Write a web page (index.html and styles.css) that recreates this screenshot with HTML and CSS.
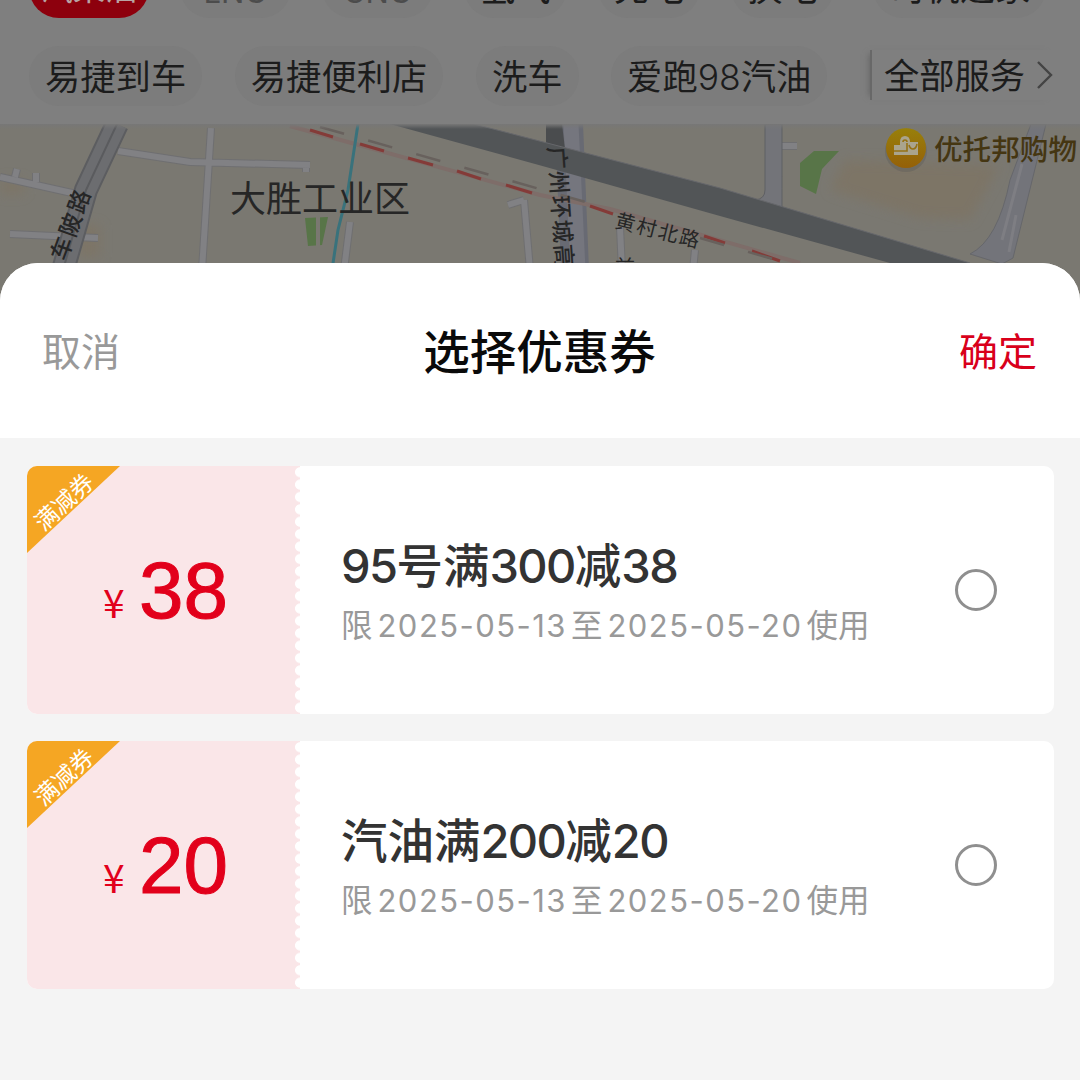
FILE: index.html
```html
<!DOCTYPE html>
<html lang="zh-CN">
<head>
<meta charset="utf-8">
<title>选择优惠券</title>
<link rel="stylesheet" href="styles.css">
</head>
<body>
<div class="screen">
  <div class="backdrop">
    <nav class="services">
      <div class="service-row service-row-first">
        <span class="chip chip-active">汽柴油</span>
        <span class="chip chip-gas muted">LNG</span>
        <span class="chip chip-gas muted">CNG</span>
        <span class="chip strong">氢气</span>
        <span class="chip">充电</span>
        <span class="chip">换电</span>
        <span class="chip chip-last">司机之家</span>
      </div>
      <div class="service-row">
        <span class="chip">易捷到车</span>
        <span class="chip">易捷便利店</span>
        <span class="chip">洗车</span>
        <span class="chip">爱跑<span class="num">98</span>汽油</span>
        <span class="all-services">全部服务
          <svg width="18" height="30" viewBox="0 0 18 30"><path d="M2 2 L15 15 L2 28" fill="none" stroke="#444" stroke-width="2.4"/></svg>
        </span>
      </div>
    </nav>
    <svg class="map" width="1080" height="180" viewBox="0 124 1080 180">
      <defs>
        <linearGradient id="pin" x1="0" y1="0" x2="0" y2="1"><stop offset="0" stop-color="#98800b"/><stop offset="1" stop-color="#956008"/></linearGradient>
        <linearGradient id="top" x1="0" y1="0" x2="0" y2="1"><stop offset="0" stop-color="#777"/><stop offset="1" stop-color="#777" stop-opacity="0"/></linearGradient>
        <filter id="soft" x="-20%" y="-20%" width="140%" height="140%"><feGaussianBlur stdDeviation="6"/></filter>
      </defs>
      <rect y="124" width="1080" height="180" fill="#7a7871"/>
      <g filter="url(#soft)" fill="#7d7566">
        <path d="M845 160 L1000 165 L970 220 L920 218 L830 190Z"/>
        <path d="M0 180h24v14H0zM78 225h22v32H78z"/>
      </g>
      <g fill="none" stroke="#6f6f71" stroke-width="8">
        <path d="M0 177 L90 197 M10 234 L98 238 M118 151 L190 162 L310 165 M211 128 L202 270 M15 177 L17 169 M36 182 L36 173 M306 163 V172 M524 200 L530 270 M508 205 L524 200 M620 227 L622 270 M695 250 L693 270 M350 222 L344 270 M775 146 H797"/>
      </g>
      <g fill="none" stroke="#818184" stroke-width="6">
        <path d="M0 177 L90 197 M10 234 L98 238 M118 151 L190 162 L310 165 M211 128 L202 270 M15 177 L17 169 M36 182 L36 173 M306 163 V172 M524 200 L530 270 M508 205 L524 200 M620 227 L622 270 M695 250 L693 270 M350 222 L344 270 M775 146 H797"/>
      </g>
      <path d="M117 124 L86 190 L63 270" fill="none" stroke="#5c5d60" stroke-width="24"/>
      <path d="M117 124 L86 190 L63 270" fill="none" stroke="#6c6d70" stroke-width="20"/>
      <path d="M117 124 L86 190 L63 270" fill="none" stroke="#5a5b5e" stroke-width="2"/>
      <path d="M765 124 V190 Q765 199 755 200 L782 214 Q782 208 782 124Z" fill="#737479" stroke="#5f6064"/>
      <path d="M1031 124 L1010 180 Q998 240 970 254 L1002 264 L1013 258 L1046 124Z" fill="#73747a" stroke="#66676b"/>
      <path d="M1022 164 L1002 240 M1016 215 L1009 252" stroke="#7e7e83" stroke-width="3"/>
      <path d="M569 124 L575 270" stroke="#686a73" stroke-width="28"/>
      <path d="M571 124 L578 270" stroke="#75767e" stroke-width="15"/>
      <path d="M546 124h16l3 25h-19z" fill="#4a4c4e"/>
      <path d="M390 124 H474 L720 188 L970 263 H890 L720 216 L546 167Z" fill="#525557"/>
      <path d="M474 124 L720 188 L970 263" fill="none" stroke="#66676b"/>
      <path d="M290 126 L540 195 L610 209 L800 263" fill="none" stroke="#7e6d69" stroke-width="4"/>
      <path d="M310 130 L333 137 M360 144 L384 151 M408 158 L433 165 M457 171 L481 179 M506 185 L532 193 M590 206 L613 214 M704 236 L725 243 M752 251 L780 261" stroke="#843b38" stroke-width="3"/>
      <path d="M320 127 L600 206 M700 238 L790 264" stroke="#68615d" stroke-width="2.5" stroke-dasharray="25 25"/>
      <path d="M358 124 L348 190 L338 230 L332 270" fill="none" stroke="#39727c" stroke-width="3"/>
      <path d="M305 218 L328 217 L322 245 L308 246Z M814 151 L839 151 L822 169 L816 194 L800 186 V163Z" fill="#587548"/>
      <path d="M318 217v30" stroke="#7a7871" stroke-width="4"/>
      <g class="map-label">
        <text x="230" y="212" font-size="36">大胜工业区</text>
        <text class="road" font-size="23" x="-34 -9 16" y="9" transform="translate(69 227) rotate(-70)">车陂路</text>
        <text font-size="20" letter-spacing="2" transform="translate(614 227) rotate(14)">黄村北路</text>
        <text class="road" font-size="23" letter-spacing="1.5" transform="translate(548 147) rotate(86)">广州环城高速</text>
        <text font-size="20" x="615" y="275">前</text>
      </g>
      <circle cx="906" cy="151" r="21" fill="#595955" opacity=".35"/>
      <circle cx="906" cy="148" r="20" fill="url(#pin)"/>
      <path d="M894 155 V145 H900 V142 Q900 136 905 136 Q910 136 910 142 H918 V155Z" fill="#aaa48d"/>
      <path d="M894 151 H907 V143 M903 142 a2 2 0 0 1 4 0 M909 145 q1 4 4 4 q3 0 4 -5" fill="none" stroke="#957114" stroke-width="1.6"/>
      <text class="poi" x="934" y="160">优托邦购物</text>
      <rect y="124" width="1080" height="5" fill="url(#top)"/>
    </svg>
  </div>

  <section class="sheet">
    <header class="sheet-head">
      <span class="cancel">取消</span>
      <h1 class="title">选择优惠券</h1>
      <span class="confirm">确定</span>
    </header>
    <div class="coupons">
      <article class="coupon">
        <div class="amount">
          <span class="ribbon"><span class="ribbon-text">满减券</span></span>
          <span class="yen">¥</span><span class="value">38</span>
        </div>
        <div class="detail">
          <h2 class="name"><span class="num">95</span>号满<span class="num">300</span>减<span class="num">38</span></h2>
          <p class="dates">限<span class="date">2025-05-13</span>至<span class="date">2025-05-20</span>使用</p>
        </div>
        <span class="radio"></span>
      </article>
      <article class="coupon">
        <div class="amount">
          <span class="ribbon"><span class="ribbon-text">满减券</span></span>
          <span class="yen">¥</span><span class="value">20</span>
        </div>
        <div class="detail">
          <h2 class="name">汽油满<span class="num">200</span>减<span class="num">20</span></h2>
          <p class="dates">限<span class="date">2025-05-13</span>至<span class="date">2025-05-20</span>使用</p>
        </div>
        <span class="radio"></span>
      </article>
    </div>
  </section>
</div>
</body>
</html>
```
FILE: styles.css
```css
* { box-sizing: border-box; }
body { margin: 0; font-family: "Noto Sans CJK SC", sans-serif; }
.screen { width: 1080px; height: 1080px; overflow: hidden; background: #7f7f7f; display: flex; flex-direction: column; }
.backdrop { height: 263px; flex: none; }
.services { height: 124px; overflow: hidden; display: flex; flex-direction: column; justify-content: flex-end; gap: 28px; padding-bottom: 18px; }
.service-row { display: flex; flex: none; height: 60px; padding-left: 29px; gap: 32.6px; white-space: nowrap; }
.service-row-first { gap: 31px; }
.chip { flex: none; height: 60px; line-height: 57px; padding: 0 16px; border-radius: 30px; background: #7c7c7c; color: #1c1c1c; font-size: 35.3px; }
.num { font-family: Inter, sans-serif; }
.chip .num { font-weight: 300; font-size: 35.5px; }
.service-row-first .chip { line-height: 55px; }
.service-row-first .chip-active { background: #8d000d; color: #b9a4a4; width: 120px; padding: 0; text-align: center; font-size: 32px; line-height: 56px; }
.service-row-first .chip-gas { width: 111px; text-align: center; padding: 0; font-family: Inter, sans-serif; font-size: 31px; line-height: 67px; }
.muted { color: #4c4c4c; }
.strong { font-weight: 500; }
.chip-last { margin-left: 8px; }
.all-services { display: flex; align-items: center; gap: 11px; height: 50px; margin: 4px 0 0 10px; padding-left: 12px; border-left: 2px solid #686868; color: #1c1c1c; font-size: 35.3px; line-height: 46px; padding-bottom: 3px; box-shadow: -5px 0 6px -4px #666; }
.all-services svg { margin-top: 3px; }
.map { display: block; }
.map-label { fill: #262626; }
.road { font-weight: 500; }
.poi { fill: #453612; font-size: 28.6px; font-weight: 500; }

.sheet { position: relative; flex: 1; background: #f4f4f4; border-radius: 38px 38px 0 0; overflow: hidden; }
.sheet-head { height: 175px; background: #fff; display: flex; align-items: center; justify-content: space-between; padding: 0 43px 3px 42px; }
.cancel, .confirm { font-size: 39px; line-height: 56px; color: #999; }
.confirm { color: #d9001b; }
.title { margin: 0; font-size: 46.5px; line-height: 66px; font-weight: 500; color: #0a0a0a; }
.coupons { display: flex; flex-direction: column; gap: 27px; padding: 28px 26px 0 27px; }
.coupon { display: flex; align-items: center; height: 248px; background: #fff; border-radius: 10px; overflow: hidden; padding-right: 57px; }
.amount { position: relative; align-self: stretch; width: 273px; flex: none; display: flex; align-items: baseline; padding: 75px 0 0 76px; color: #e2001b; background: radial-gradient(circle at 100% 50%, #fff 0 4.6px, transparent 5.4px) right 0 top 0 / 8px 12.4px repeat-y, #fae6e8; }
.yen { font-size: 39px; line-height: 100px; width: 36px; font-family: "Noto Sans CJK SC", sans-serif; }
.value { font-family: "Liberation Sans", sans-serif; font-size: 80px; line-height: 100px; -webkit-text-stroke: 1px #e2001b; }
.ribbon { position: absolute; left: 0; top: 0; width: 93px; height: 87px; background: #f5a623; clip-path: polygon(0 0, 100% 0, 0 100%); }
.ribbon-text { position: absolute; left: -14px; top: 20px; width: 100px; text-align: center; color: #fff; font-size: 23.5px; line-height: 30px; transform: rotate(-43deg); }
.detail { flex: 1; padding: 2px 0 0 41px; }
.name { margin: 0; font-size: 46.5px; line-height: 64px; font-weight: 500; color: #333; }
.name .num { font-size: 47px; letter-spacing: -1.6px; }
.dates { margin: 0; font-size: 31.5px; line-height: 50px; color: #999; white-space: nowrap; }
.date { font-family: Inter, sans-serif; font-size: 31px; letter-spacing: 1.45px; margin: 0 4px 0 5px; }
.radio { width: 42px; height: 42px; flex: none; border: 3px solid #8f8f8f; border-radius: 50%; }
```
